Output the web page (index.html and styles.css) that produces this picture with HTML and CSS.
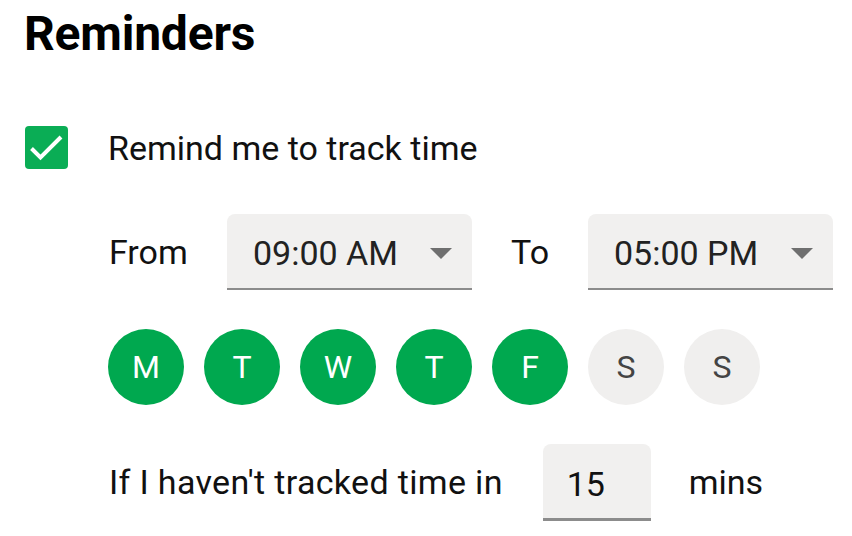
FILE: index.html
```html
<!DOCTYPE html>
<html>
<head>
<meta charset="utf-8">
<link rel="stylesheet" href="styles.css">
</head>
<body>
<div class="page">
  <h1 class="title">Reminders</h1>
  <div class="check-row">
    <span class="checkbox">
      <svg width="43" height="43" viewBox="0 0 43 43"><path d="M6.5 22.5 L15.5 31.5 L36 11" fill="none" stroke="#fff" stroke-width="4"/></svg>
    </span>
    <span class="check-label">Remind me to track time</span>
  </div>
  <div class="indent">
    <div class="time-row">
      <span class="lbl from">From</span>
      <div class="select">
        <span class="select-val">09:00 AM</span>
        <span class="arrow"></span>
      </div>
      <span class="lbl to">To</span>
      <div class="select">
        <span class="select-val">05:00 PM</span>
        <span class="arrow"></span>
      </div>
    </div>
    <div class="days">
      <span class="day on">M</span>
      <span class="day on">T</span>
      <span class="day on">W</span>
      <span class="day on">T</span>
      <span class="day on">F</span>
      <span class="day">S</span>
      <span class="day">S</span>
    </div>
    <div class="mins-row">
      <span class="lbl wide">If I haven't tracked time in</span>
      <div class="num"><span>15</span></div>
      <span class="lbl">mins</span>
    </div>
  </div>
</div>
</body>
</html>
```
FILE: styles.css
```css
html, body {
  margin: 0;
  padding: 0;
  background: #fff;
}
body {
  font-family: Roboto, "Liberation Sans", sans-serif;
  color: #111;
}
.page {
  padding: 0 0 0 24px;
  width: 828px;
  height: 536px;
  overflow: hidden;
}
.title {
  margin: 0;
  padding-top: 4px;
  font-size: 48px;
  font-weight: 700;
  line-height: 60px;
  color: #000;
  letter-spacing: -0.2px;
}
.check-row {
  display: flex;
  align-items: center;
  margin-top: 62px;
  height: 43px;
}
.checkbox {
  width: 43px;
  height: 43px;
  margin-left: 1px;
  border-radius: 4px;
  background: #0aad55;
  display: block;
}
.checkbox svg { display: block; }
.check-label {
  margin-left: 40px;
  font-size: 34px;
  color: #111;
}
.indent {
  padding-left: 85px;
}
.time-row {
  display: flex;
  align-items: center;
  margin-top: 45px;
  height: 76px;
}
.lbl {
  font-size: 34px;
  color: #111;
}
.wide { letter-spacing: 0.33px; }
.from { width: 118px; }
.to { width: 77px; margin-left: 39px; }
.select {
  width: 245px;
  height: 74px;
  background: #f1f0ef;
  border-radius: 8px 8px 0 0;
  border-bottom: 2px solid #8c8c8c;
  display: flex;
  align-items: center;
  box-sizing: content-box;
}
.select-val {
  margin-left: 26px;
  font-size: 34px;
  color: #222;
  flex: 1;
  padding-top: 4px;
}
.arrow {
  width: 0;
  height: 0;
  border-left: 11.5px solid transparent;
  border-right: 11.5px solid transparent;
  border-top: 11px solid #6f6f6f;
  margin-right: 20px;
  margin-top: 4px;
}
.days {
  display: flex;
  gap: 20px;
  margin-top: 39px;
  margin-left: -1px;
}
.day {
  width: 76px;
  height: 76px;
  border-radius: 50%;
  background: #f0efee;
  color: #444;
  font-size: 32px;
  display: flex;
  align-items: center;
  justify-content: center;
}
.day.on {
  background: #00a84f;
  color: #fff;
}
.mins-row {
  display: flex;
  align-items: center;
  margin-top: 39px;
  height: 76px;
}
.num {
  width: 108px;
  height: 74px;
  margin-left: 40px;
  margin-right: 38px;
  background: #f1f0ef;
  border-radius: 8px 8px 0 0;
  border-bottom: 3px solid #8c8c8c;
  display: flex;
  align-items: center;
  font-size: 34px;
  color: #111;
}
.num span {
  margin-left: 24px;
  padding-top: 6px;
}
```
